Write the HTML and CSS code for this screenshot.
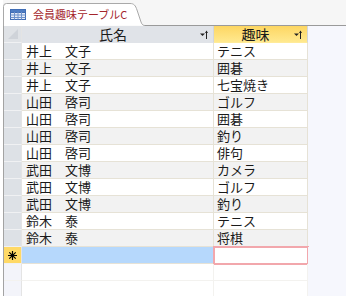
FILE: index.html
```html
<!DOCTYPE html>
<html lang="ja">
<head>
    <meta charset="UTF-8">
    <meta name="viewport" content="width=device-width, initial-scale=1.0">
    <title>会員趣味テーブルC</title>
    <link rel="stylesheet" href="styles.css">
</head>
<body>
    <div class="window">
        <div class="tabbar">
            <div class="tab">
                <svg class="tab-shape" width="142" height="23" viewBox="0 0 142 23">
                    <path d="M0.5,23 V3.5 Q0.5,0.5 3.5,0.5 H127 C131,0.5 132.5,2.5 134,7 L138,19 C139,22 140.5,22.5 142,22.5" fill="#fff" stroke="#a9a9a9"/>
                </svg>
                <svg class="tab-icon" width="16" height="11" viewBox="0 0 16 11">
                    <rect x="0.5" y="0.5" width="15" height="10" fill="#e4ebf7" stroke="#3f6db5"/>
                    <rect x="0.5" y="0.5" width="15" height="3" fill="#4d7cc3" stroke="#3f6db5"/>
                    <path d="M4.5,3 V10.5 M8,3 V10.5 M11.5,3 V10.5 M0.5,6 H15.5 M0.5,8.5 H15.5" stroke="#6f93cc" stroke-width="1"/>
                </svg>
                <span class="tab-title">会員趣味テーブルC</span>
            </div>
            <div class="tab-rest"></div>
        </div>

        <div class="sheet">
            <div class="row head">
                <div class="sel corner"></div>
                <div class="c1 hcell">
                    <span class="htext">氏名</span>
                    <svg class="sort" width="8" height="9" viewBox="0 0 8 9">
                        <path d="M0,3.5 H5 L2.5,6 Z" fill="#222"/>
                        <path d="M6.5,1.5 V9" stroke="#222"/>
                        <path d="M5,3 L6.5,0.5 L8,3 Z" fill="#222"/>
                    </svg>
                </div>
                <div class="c2 hcell active">
                    <span class="htext">趣味</span>
                    <svg class="sort" width="8" height="9" viewBox="0 0 8 9">
                        <path d="M0,3.5 H5 L2.5,6 Z" fill="#222"/>
                        <path d="M6.5,1.5 V9" stroke="#222"/>
                        <path d="M5,3 L6.5,0.5 L8,3 Z" fill="#222"/>
                    </svg>
                </div>
                <div class="rest"></div>
            </div>

            <div class="row"><div class="sel"></div><div class="c1">井上　文子</div><div class="c2">テニス</div><div class="rest"></div></div>
            <div class="row alt"><div class="sel"></div><div class="c1">井上　文子</div><div class="c2">囲碁</div><div class="rest"></div></div>
            <div class="row"><div class="sel"></div><div class="c1">井上　文子</div><div class="c2">七宝焼き</div><div class="rest"></div></div>
            <div class="row alt"><div class="sel"></div><div class="c1">山田　啓司</div><div class="c2">ゴルフ</div><div class="rest"></div></div>
            <div class="row"><div class="sel"></div><div class="c1">山田　啓司</div><div class="c2">囲碁</div><div class="rest"></div></div>
            <div class="row alt"><div class="sel"></div><div class="c1">山田　啓司</div><div class="c2">釣り</div><div class="rest"></div></div>
            <div class="row"><div class="sel"></div><div class="c1">山田　啓司</div><div class="c2">俳句</div><div class="rest"></div></div>
            <div class="row alt"><div class="sel"></div><div class="c1">武田　文博</div><div class="c2">カメラ</div><div class="rest"></div></div>
            <div class="row"><div class="sel"></div><div class="c1">武田　文博</div><div class="c2">ゴルフ</div><div class="rest"></div></div>
            <div class="row alt"><div class="sel"></div><div class="c1">武田　文博</div><div class="c2">釣り</div><div class="rest"></div></div>
            <div class="row"><div class="sel"></div><div class="c1">鈴木　泰</div><div class="c2">テニス</div><div class="rest"></div></div>
            <div class="row alt"><div class="sel"></div><div class="c1">鈴木　泰</div><div class="c2">将棋</div><div class="rest"></div></div>

            <div class="row newrow">
                <div class="sel">
                    <svg width="9" height="9" viewBox="0 0 9 9">
                        <path d="M4.5,0 V9 M0,4.5 H9 M1.3,1.3 L7.7,7.7 M7.7,1.3 L1.3,7.7" stroke="#000" stroke-width="1.2"/>
                    </svg>
                </div>
                <div class="c1"></div>
                <div class="c2 current"></div>
                <div class="rest"></div>
            </div>

            <div class="row empty"><div class="sel"></div><div class="c1"></div><div class="c2"></div><div class="rest"></div></div>
            <div class="row empty"><div class="sel"></div><div class="c1"></div><div class="c2"></div><div class="rest"></div></div>
        </div>
    </div>
</body>
</html>
```

FILE: styles.css
```css
body {
    margin: 0;
    height: 296px;
    overflow: hidden;
    background-color: #fff;
    font-family: "Noto Sans CJK JP", "DejaVu Sans", sans-serif;
    font-size: 13px;
    color: #1a1a1a;
}

.window {
    margin-left: 3px;
}

/* tab strip */
.tabbar {
    display: flex;
    height: 26px;
    background-color: #f6f6f6;
}

.tab {
    position: relative;
    display: flex;
    align-items: center;
    width: 142px;
    height: 23px;
    margin-top: 3px;
}

.tab-shape {
    position: absolute;
    left: 0;
    top: 0;
}

.tab-icon {
    position: relative;
    margin-left: 7px;
    margin-top: -1px;
}

.tab-title {
    position: relative;
    margin-left: 7px;
    margin-top: -1px;
    font-size: 11px;
    line-height: 14px;
    color: #a4262c;
}

.tab-rest {
    flex: 1;
    border-bottom: 1px solid #9a9a9a;
}

/* datasheet */
.sheet {
    border-left: 1px solid #a3a3a3;
}

.row {
    display: flex;
    height: 17px;
}

.row > div {
    box-sizing: border-box;
    height: 17px;
    border-bottom: 1px solid #e6e2d6;
    line-height: 16px;
    white-space: nowrap;
}

.sel {
    width: 18px;
    background-color: #dde1e6;
    border-right: 1px solid #e4e4e4;
    display: flex;
    align-items: center;
    justify-content: center;
}

.row > .sel {
    border-bottom-color: #f0f1f3;
}

.c1 {
    width: 192px;
    padding-left: 4px;
    border-right: 1px solid #e6e2d6;
}

.c2 {
    width: 94px;
    padding-left: 3px;
    border-right: 1px solid #e6e2d6;
}

.rest {
    flex: 1;
    background-color: #f6f7fd;
}

.row > .rest {
    border-bottom: none;
}

.alt .c1, .alt .c2 {
    background-color: #f2f2f2;
}

/* header row */
.head .corner {
    position: relative;
    background-color: #dfe2e6;
}

.head .corner::after {
    content: "";
    position: absolute;
    right: 3px;
    bottom: 3px;
    border-left: 10px solid transparent;
    border-bottom: 10px solid #cfd3d9;
}

.hcell {
    display: flex;
    align-items: center;
    background-color: #e0e3e8;
    font-size: 14px;
}

.row > .hcell {
    border-right-color: #d3d6db;
    border-bottom-color: #e0e3e8;
}

.htext {
    flex: 1;
    text-align: center;
}

.sort {
    margin-right: 5px;
}

.hcell.active {
    background: linear-gradient(#fdd662, #ffe98f);
}

.row > .hcell.active {
    border-bottom-color: #ffeb99;
}

/* new record row */
.newrow .sel {
    background-color: #ffd966;
}

.newrow .c1 {
    background-color: #b6d8fc;
}

.current {
    outline: 2px solid #f2a7ac;
    outline-offset: -1px;
    background-color: #fff;
}

.empty .sel {
    background-color: #f3f4fa;
}

.row.empty > div {
    border-bottom-color: #f3f2ef;
}

.empty .c1, .empty .c2 {
    border-right-color: #f3f2ef;
}
```
